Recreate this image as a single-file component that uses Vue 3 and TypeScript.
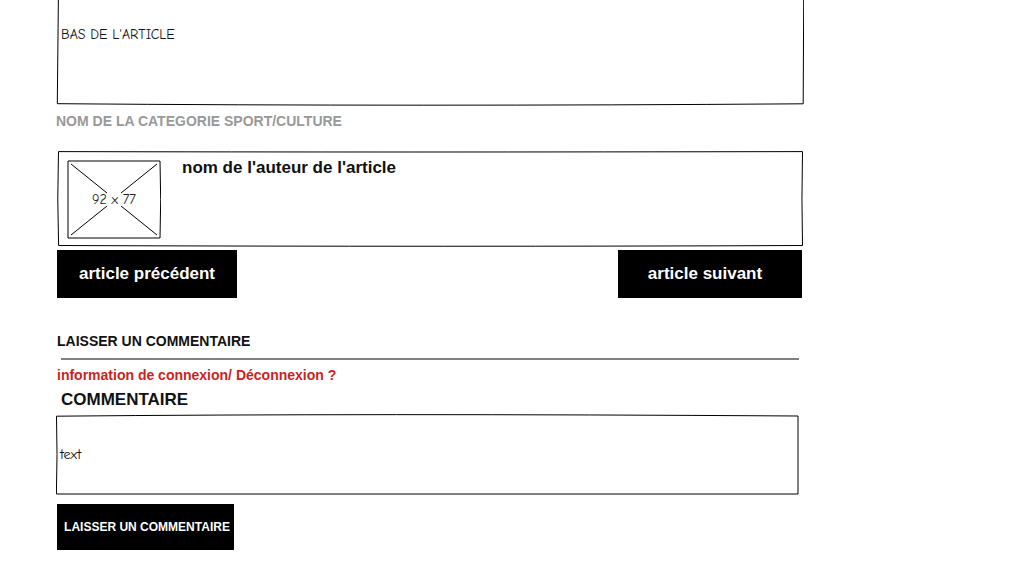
<script setup lang="ts">
import { ref } from 'vue'

const comment = ref<string>('text')
</script>

<template>
  <main class="page">
    <article class="box article">
      <svg class="frame" viewBox="0 0 748 106" preserveAspectRatio="none" aria-hidden="true">
        <path d="M2.4 -2L1.3 103.7Q360 106.6 747.2 103.8L747.7 -2" />
      </svg>
      <p class="hand">BAS DE L'ARTICLE</p>
    </article>

    <p class="category">NOM DE LA CATEGORIE SPORT/CULTURE</p>

    <section class="box author">
      <svg class="frame" viewBox="0 0 748 96" preserveAspectRatio="none" aria-hidden="true">
        <path d="M2.5 0.6Q340 1.4 746.5 0.6Q745.4 48 746.5 94.5Q400 96 2.6 94.5Q1 48 2.5 0.6Z" />
      </svg>
      <svg class="avatar" viewBox="0 0 94 80" role="img" aria-label="92 x 77">
        <path d="M1 1H93Q94.4 40 93 78H1Z" />
        <path d="M4 4L40 33M90 4L54 33M4 75L40 46M90 75L54 46" />
        <text x="47" y="44" text-anchor="middle">92 x 77</text>
      </svg>
      <h2 class="name">nom de l'auteur de l'article</h2>
    </section>

    <nav class="pager">
      <button type="button" class="btn previous">article précédent</button>
      <button type="button" class="btn next">article suivant</button>
    </nav>

    <h2 class="title">LAISSER UN COMMENTAIRE</h2>
    <hr class="rule" />
    <a class="login" href="#">information de connexion/ Déconnexion ?</a>

    <form @submit.prevent>
      <label class="label" for="comment">COMMENTAIRE</label>
      <div class="box field">
        <svg class="frame" viewBox="0 0 748 82" preserveAspectRatio="none" aria-hidden="true">
          <path d="M0.5 2.2Q310 -0.8 742 2V80H0.4Q1.6 40 0.5 2.2Z" />
        </svg>
        <textarea id="comment" v-model="comment" class="hand input"></textarea>
      </div>
      <button type="submit" class="btn submit">LAISSER UN COMMENTAIRE</button>
    </form>
  </main>
</template>

<style>
body {
  margin: 0;
  background: #fff;
}
</style>

<style scoped>
.page {
  box-sizing: border-box;
  padding: 0 232px 12px 56px;
  font-family: "Liberation Sans", Arial, sans-serif;
  color: #111;
}

.page * {
  box-sizing: border-box;
}

h2,
p {
  margin: 0;
}

.box {
  position: relative;
}

.frame {
  position: absolute;
  inset: 0;
  width: 100%;
  height: 100%;
  pointer-events: none;
}

.frame path,
.avatar path {
  fill: none;
  stroke: #000;
  stroke-width: 1;
  vector-effect: non-scaling-stroke;
}

.hand {
  font-family: "Comic Sans MS", "Comic Neue", "Noto Sans", sans-serif;
  font-size: 14px;
  line-height: 20px;
  color: #111;
}

.article {
  height: 106px;
  padding: 25px 5px;
}

.category {
  padding-top: 5px;
  font-size: 14px;
  font-weight: 700;
  line-height: 20px;
  color: #999;
}

.author {
  display: flex;
  gap: 21px;
  height: 96px;
  margin-top: 20px;
  padding: 9px 11px;
}

.avatar {
  width: 94px;
  height: 80px;
}

.avatar text {
  font-family: "Comic Sans MS", "Comic Neue", "Noto Sans", sans-serif;
  font-size: 14px;
  fill: #222;
}

.name {
  font-size: 17px;
  line-height: 20px;
  margin-top: -2px;
}

.pager {
  display: flex;
  justify-content: space-between;
  margin: 3px 2px 0 1px;
}

.btn {
  display: block;
  border: 0;
  padding: 0;
  background: #000;
  color: #fff;
  font-family: inherit;
  font-size: 17px;
  font-weight: 700;
  line-height: 20px;
  cursor: pointer;
}

.previous {
  width: 180px;
  height: 48px;
}

.next {
  width: 184px;
  height: 48px;
  padding-right: 10px;
}

.title {
  margin: 33px 0 0 1px;
  font-size: 14px;
  line-height: 20px;
}

.rule {
  height: 2px;
  margin: 7px 5px 5px;
  border: 0;
  background: #808080;
}

.login {
  display: block;
  width: fit-content;
  margin-left: 1px;
  font-size: 14px;
  font-weight: 700;
  line-height: 20px;
  color: #cc1f1f;
  text-decoration: none;
}

.label {
  display: block;
  width: fit-content;
  margin: 5px 0 0 5px;
  font-size: 17px;
  font-weight: 700;
  line-height: 20px;
}

.field {
  height: 82px;
  margin-top: 4px;
}

.input {
  display: block;
  width: 100%;
  height: 82px;
  padding: 31px 12px 25px 4px;
  border: 0;
  outline: 0;
  resize: none;
  background: transparent;
}

.submit {
  width: 177px;
  height: 46px;
  margin: 8px 0 0 1px;
  padding-left: 3px;
  font-size: 12px;
}
</style>
